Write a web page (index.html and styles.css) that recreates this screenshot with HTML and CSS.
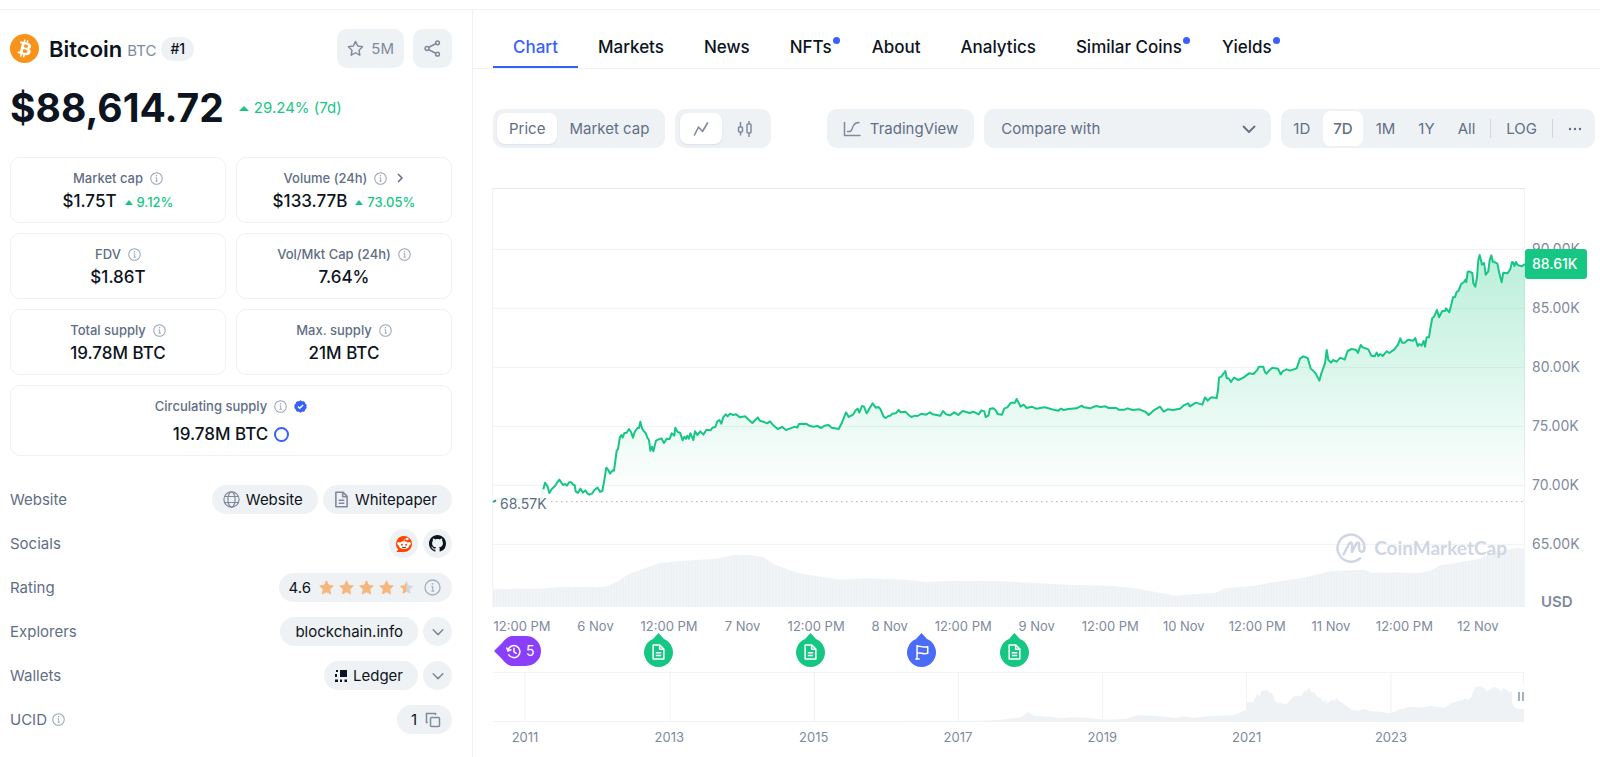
FILE: index.html
```html
<!DOCTYPE html>
<html lang="en">
<head>
<meta charset="utf-8">
<title>Bitcoin price today, BTC to USD live price</title>
<link rel="stylesheet" href="styles.css">
</head>
<body>
<svg class="sprite" aria-hidden="true">
  <symbol id="info" viewBox="0 0 14 14"><circle cx="7" cy="7" r="6.2" fill="none" stroke="currentColor" stroke-width="1.1"/><path d="M6 6.2h1.2v3.6M6 9.9h2.4" fill="none" stroke="currentColor"/><circle cx="7" cy="4" r=".8" fill="currentColor"/></symbol>
  <symbol id="down" viewBox="0 0 16 16"><path d="M2.5 5.5 8 11l5.500-5.500" fill="none" stroke="currentColor" stroke-width="1.800" stroke-linecap="round" stroke-linejoin="round"/></symbol>
  <symbol id="star" viewBox="0 0 16 16"><path d="M8 .9l2.200 4.700 5 .7-3.700 3.500.9 5.100L8 12.500l-4.400 2.400.9-5.100L.8 6.300l5-.7z" fill="currentColor" stroke="currentColor" stroke-linejoin="round"/></symbol>
  <symbol id="doc" viewBox="0 0 16 18"><path d="M2 1.200h7.500L14 5.700v11.100H2zM9.300 1.500V6H14M5 9.800h6M5 13h6" fill="none" stroke="currentColor" stroke-width="1.700" stroke-linejoin="round"/></symbol>
</svg>
<div class="topbar"></div>
<div class="page">
  <aside class="sidebar">
    <header class="coin">
      <svg class="coin-logo" viewBox="0 0 32 32"><circle cx="16" cy="16" r="16" fill="#f7931a"/><path fill="#fff" d="M23.189 14.02c.314-2.096-1.283-3.223-3.465-3.975l.708-2.840-1.728-.43-.69 2.765c-.454-.114-.92-.22-1.385-.326l.695-2.783L15.596 6l-.708 2.839c-.376-.086-.746-.17-1.104-.26l.002-.009-2.384-.595-.46 1.846s1.283.294 1.256.312c.7.175.826.638.805 1.006l-.806 3.235c.048.012.11.03.18.057l-.183-.045-1.130 4.532c-.086.212-.303.531-.793.41.018.025-1.256-.313-1.256-.313l-.858 1.978 2.250.561c.418.105.828.215 1.231.318l-.715 2.872 1.727.43.708-2.840c.472.127.93.245 1.378.357l-.706 2.828 1.728.43.715-2.866c2.948.558 5.164.333 6.097-2.333.752-2.146-.037-3.385-1.588-4.192 1.130-.26 1.980-1.003 2.207-2.538zm-3.950 5.538c-.533 2.147-4.148.986-5.320.695l.95-3.805c1.172.293 4.929.872 4.370 3.110zm.535-5.569c-.487 1.953-3.495.96-4.470.717l.86-3.450c.975.243 4.118.696 3.610 2.733z"/></svg>
      <h1 class="coin-name">Bitcoin</h1><span class="coin-symbol">BTC</span><span class="rank">#1</span>
      <div class="coin-actions">
        <button class="action watch"><svg width="17" height="17" viewBox="0 0 18 18"><path d="M9 1.500l2.300 4.900 5.200.7-3.800 3.700.9 5.300L9 13.500l-4.600 2.600.9-5.300L1.500 7.100l5.200-.7z" fill="none" stroke="currentColor" stroke-width="1.500" stroke-linejoin="round"/></svg>5M</button>
        <button class="action share" aria-label="Share"><svg width="17" height="17" viewBox="0 0 17 17" fill="none" stroke="currentColor" stroke-width="1.500"><path d="M4.500 7.500l7.500-4M4.500 9.500l7.500 4"/><circle cx="3" cy="8.500" r="1.900"/><circle cx="13.500" cy="2.800" r="1.900"/><circle cx="13.500" cy="14.200" r="1.900"/></svg></button>
      </div>
    </header>
    <div class="price-row"><span class="price">$88,614.72</span><span class="change big"><i class="up"></i>29.24% (7d)</span></div>
    <dl class="stats">
      <div class="stat"><dt>Market cap <svg class="info"><use href="#info"/></svg></dt><dd>$1.75T <span class="change"><i class="up"></i>9.12%</span></dd></div>
      <div class="stat"><dt>Volume (24h) <svg class="info"><use href="#info"/></svg><svg class="more" viewBox="0 0 8 12"><path d="M2 2l4 4-4 4" fill="none" stroke="currentColor" stroke-width="1.500"/></svg></dt><dd>$133.77B <span class="change"><i class="up"></i>73.05%</span></dd></div>
      <div class="stat"><dt>FDV <svg class="info"><use href="#info"/></svg></dt><dd>$1.86T</dd></div>
      <div class="stat"><dt>Vol/Mkt Cap (24h) <svg class="info"><use href="#info"/></svg></dt><dd>7.64%</dd></div>
      <div class="stat"><dt>Total supply <svg class="info"><use href="#info"/></svg></dt><dd>19.78M BTC</dd></div>
      <div class="stat"><dt>Max. supply <svg class="info"><use href="#info"/></svg></dt><dd>21M BTC</dd></div>
      <div class="stat wide"><dt>Circulating supply <svg class="info"><use href="#info"/></svg><svg class="info verified" viewBox="0 0 14 14"><path d="M7 .8l1.800 1.100 2.100.1.900 1.900 1.400 1.600L12.900 7l.3 1.500-1.400 1.600-.9 1.900-2.100.1L7 13.200l-1.800-1.100-2.100-.1-.9-1.900L.8 8.500 1.100 7 .8 5.500l1.400-1.600L3.100 2l2.100-.1z" fill="#3861fb" stroke="#3861fb" stroke-linejoin="round"/><path d="M4.300 7.100l1.900 1.900 3.600-3.700" fill="none" stroke="#fff" stroke-width="1.500"/></svg></dt><dd>19.78M BTC<i class="ring"></i></dd></div>
    </dl>
    <ul class="links">
      <li>Website<span class="pills"><a class="pill" href="#"><svg width="17" height="17" viewBox="0 0 17 17" fill="none" stroke="currentColor" stroke-width="1.200"><circle cx="8.500" cy="8.500" r="7.600"/><ellipse cx="8.500" cy="8.500" rx="3.600" ry="7.600"/><path d="M1.700 5.500h13.600M1.700 11.500h13.600"/></svg>Website</a><a class="pill" href="#"><svg width="15" height="17"><use href="#doc"/></svg>Whitepaper</a></span></li>
      <li>Socials<span class="pills"><a class="pill round" href="#" aria-label="Reddit"><svg width="18" height="18" viewBox="0 0 18 18"><path d="M9 1a8 8 0 1 1 0 16H1.300l2-2.400A8 8 0 0 1 9 1z" fill="#ff4500"/><ellipse cx="9" cy="10.200" rx="5.300" ry="3.900" fill="#fff"/><circle cx="3.700" cy="8.600" r="1.500" fill="#fff"/><circle cx="14.300" cy="8.600" r="1.500" fill="#fff"/><circle cx="12.300" cy="4" r="1.300" fill="#fff"/><path d="M9 6.500c0-1.800 1-2.600 2.600-2.500" fill="none" stroke="#fff" stroke-width=".8"/><circle cx="6.900" cy="9.700" r="1" fill="#ff4500"/><circle cx="11.100" cy="9.700" r="1" fill="#ff4500"/><path d="M7 12.100q2 1.200 4 0" fill="none" stroke="#222" stroke-width=".9"/></svg></a><a class="pill round" href="#" aria-label="GitHub"><svg width="17" height="17" viewBox="0 0 16 16"><path fill="#0d1421" d="M8 0C3.580 0 0 3.580 0 8c0 3.540 2.290 6.530 5.470 7.590.4.07.55-.17.55-.38 0-.19-.01-.82-.01-1.490-2.010.37-2.530-.49-2.690-.94-.09-.23-.48-.94-.82-1.130-.28-.15-.68-.52-.01-.53.63-.01 1.080.58 1.230.82.72 1.210 1.870.87 2.330.66.07-.52.28-.87.51-1.070-1.780-.2-3.640-.89-3.640-3.950 0-.87.31-1.590.82-2.150-.08-.2-.36-1.020.08-2.120 0 0 .67-.21 2.200.82.64-.18 1.320-.27 2-.27s1.360.09 2 .27c1.530-1.040 2.200-.82 2.200-.82.44 1.100.16 1.920.08 2.120.51.56.82 1.270.82 2.150 0 3.070-1.870 3.750-3.650 3.950.29.25.54.73.54 1.480 0 1.070-.01 1.930-.01 2.200 0 .21.15.46.55.38A8.013 8.013 0 0 0 16 8c0-4.420-3.580-8-8-8z"/></svg></a></span></li>
      <li>Rating<span class="pills"><span class="pill rating">4.6<span class="stars"><svg><use href="#star"/></svg><svg><use href="#star"/></svg><svg><use href="#star"/></svg><svg><use href="#star"/></svg><svg viewBox="0 0 16 16"><path d="M8 .9l2.200 4.700 5 .7-3.700 3.500.9 5.100L8 12.500z" fill="#cfd6e4"/><path d="M8 .9v11.600l-4.400 2.400.9-5.100L.8 6.300l5-.7z" fill="currentColor"/></svg></span><svg class="rating-info"><use href="#info"/></svg></span></span></li>
      <li>Explorers<span class="pills"><a class="pill plain" href="#">blockchain.info</a><button class="pill round" aria-label="More explorers"><svg width="14" height="14"><use href="#down"/></svg></button></span></li>
      <li>Wallets<span class="pills"><a class="pill" href="#"><svg class="ledger" width="12" height="12" viewBox="0 0 12 12" fill="#0d1421"><path d="M5 0h7v7H5zM1 0h2v2H1zM0 4h2v3H0zM0 9.500h3V12H0zM5 9.500h2V12H5zM9.500 9.500H12V12H9.500z"/></svg>Ledger</a><button class="pill round" aria-label="More wallets"><svg width="14" height="14"><use href="#down"/></svg></button></span></li>
      <li><span>UCID <svg class="info"><use href="#info"/></svg></span><span class="pills"><button class="pill ucid">1<svg width="16" height="16" viewBox="0 0 16 16" fill="none" stroke="currentColor" stroke-width="1.500"><rect x="5.500" y="5.500" width="9" height="9" rx="1"/><path d="M2.800 10.500H1.500v-9h9v1.600"/></svg></button></span></li>
    </ul>
  </aside>

  <main class="main">
    <nav class="tabs"><a class="tab active" href="#">Chart</a><a class="tab" href="#">Markets</a><a class="tab" href="#">News</a><a class="tab dot" href="#">NFTs</a><a class="tab" href="#">About</a><a class="tab" href="#">Analytics</a><a class="tab dot" href="#">Similar Coins</a><a class="tab dot" href="#">Yields</a></nav>
    <div class="content">
      <div class="controls">
        <div class="group"><button class="seg on">Price</button><button class="seg">Market cap</button></div>
        <div class="group icons"><button class="seg on" aria-label="Line chart"><svg width="16" height="16" viewBox="0 0 16 16" fill="none" stroke="currentColor" stroke-width="1.600" stroke-linecap="round" stroke-linejoin="round"><path d="M1.500 14l4-8 4 4.500L14.500 2"/></svg></button><button class="seg" aria-label="Candlestick chart"><svg width="16" height="16" viewBox="0 0 16 16" fill="none" stroke="currentColor" stroke-width="1.500"><path d="M3.500 1v5M3.500 11v3.500M12 0v3M12 12v4"/><rect x="1.500" y="6" width="4" height="5" rx="1"/><rect x="10" y="3" width="4" height="9" rx="1"/></svg></button></div>
        <button class="group tv"><svg width="18" height="16" viewBox="0 0 18 16" fill="none" stroke="currentColor" stroke-width="1.500" stroke-linecap="round"><path d="M1.500 1.500v13H17M4.500 10.500c5 .5 4-2.500 6-6C11.500 2.500 13 1.500 16 1.500"/></svg>TradingView</button>
        <label class="compare"><select aria-label="Compare with"><option>Compare with</option></select><svg width="16" height="16"><use href="#down"/></svg></label>
        <div class="group ranges"><button class="range">1D</button><button class="range on">7D</button><button class="range">1M</button><button class="range">1Y</button><button class="range">All</button><i class="sep"></i><button class="range log">LOG</button><i class="sep"></i><button class="range dots" aria-label="More"><svg width="14" height="4" viewBox="0 0 14 4" fill="currentColor"><circle cx="2" cy="2" r="1.200"/><circle cx="7" cy="2" r="1.200"/><circle cx="12" cy="2" r="1.200"/></svg></button></div>
      </div>

      <div class="chart">
        <div class="plot">
          <svg class="plot-svg" viewBox="0 0 3099 1257" preserveAspectRatio="none">
            <defs>
              <linearGradient id="fade" gradientUnits="userSpaceOnUse" x1="0" y1="200" x2="0" y2="920"><stop offset="0" stop-color="#16c784" stop-opacity=".29"/><stop offset="1" stop-color="#16c784" stop-opacity="0"/></linearGradient>
              <pattern id="bars" width="9" height="9" patternUnits="userSpaceOnUse"><rect width="9" height="9" fill="#eff2f5"/><rect width="2" height="9" fill="#f4f6f8"/></pattern>
            </defs>
            <path class="grid-line" d="M0 184H3099M0 361H3099M0 538H3099M0 715H3099M0 892H3099M0 1069H3099M2 0V1257M3097 0V1257"/>
            <path class="top-line" d="M0 1H3099"/>
            <path fill="url(#bars)" d="M0 1257V1204L162 1201 195 1198 253 1197 339 1196 377 1181 403 1162 435 1149 500 1126 575 1118 671 1112 725 1101 778 1101 816 1108 843 1128 918 1155 971 1164 1046 1175 1132 1171 1239 1175 1303 1182 1357 1179 1518 1179 1644 1186 1740 1191 1858 1193 1923 1199 1987 1211 2051 1223 2105 1219 2169 1215 2201 1200 2287 1193 2351 1181 2426 1171 2517 1149 2619 1145 2640 1155 2715 1153 2769 1156 2812 1149 2844 1132 2887 1126 2962 1112 3005 1091 3058 1083 3080 1079 3099 1083V1257Z"/>
            <path class="early" d="M12 936 36 930 52 926 70 932 100 936 130 934 148 932 154 904"/>
            <path id="price-area" fill="url(#fade)" d="M154 941V904L159 884 167 896 172 915 180 902 189 894 195 884 202 875 213 891 225 893 231 883 238 883 248 891 251 910 258 915 265 902 273 914 280 907 292 920 300 917 307 906 317 899 324 911 331 909 343 839 354 857 366 848 374 788 378 784 383 750 388 741 397 735 411 723 423 749 436 720 445 701 450 721 461 735 471 756 475 788 484 790 492 758 508 751 516 765 533 753 539 736 550 719 564 734 572 757 604 756 609 730 634 740 656 727 670 717 676 700 688 707 701 679 714 677 732 679 744 688 759 685 781 705 798 688 814 701 834 700 857 723 882 726 909 716 921 708 942 707 964 716 988 720 1010 711 1019 719 1040 723 1062 673 1084 679 1110 654 1124 676 1142 646 1165 663 1181 690 1220 666 1258 687 1302 680 1345 683 1374 682 1412 669 1460 679 1481 687 1494 662 1511 667 1530 680 1557 644 1574 633 1586 656 1632 662 1699 668 1769 653 1794 661 1840 655 1898 665 1942 664 1970 681 2004 656 2015 671 2064 662 2088 646 2131 650 2139 628 2174 630 2181 569 2200 549 2217 582 2254 569 2271 556 2284 558 2301 536 2314 536 2323 557 2341 539 2358 542 2366 559 2414 541 2424 512 2434 505 2447 510 2456 541 2471 556 2482 578 2499 526 2504 486 2517 524 2558 515 2567 489 2591 485 2606 471 2629 484 2638 503 2672 504 2707 484 2725 451 2738 464 2770 450 2777 474 2799 476 2811 448 2821 390 2835 366 2841 388 2862 361 2872 373 2883 328 2907 289 2923 282 2927 252 2941 255 2950 296 2963 201 2970 230 2981 260 2998 202 3016 226 3029 283 3034 254 3047 256 3060 222 3089 235 3099 228V941Z"/>
            <path class="price-line" d="M154 904L159 884 167 896 172 915 180 902 189 894 195 884 202 875 208 884 213 891 220 888 225 893 231 883 238 883 243 890 248 891 251 910 258 915 265 902 273 914 280 907 286 916 292 920 300 917 307 906 317 899 324 911 331 909 337 876 343 839 349 846 354 857 362 847 366 848 370 819 374 788 378 784 383 750 388 741 392 749 397 735 404 734 411 723 417 732 423 749 428 732 436 720 441 720 445 701 450 721 455 729 461 735 466 749 471 756 475 788 480 776 484 790 492 758 500 754 508 751 516 765 524 752 533 753 539 736 547 743 550 719 557 732 564 734 572 757 577 746 582 753 586 743 591 752 595 736 604 756 609 730 616 741 625 730 634 740 644 725 656 727 661 719 670 717 676 700 682 696 688 707 693 689 701 679 707 685 714 677 724 681 732 679 744 688 759 685 770 695 781 705 790 696 798 688 803 698 814 701 825 706 834 700 844 712 857 723 871 717 882 726 895 721 909 716 916 719 921 708 942 707 952 713 964 716 976 714 988 720 997 713 1010 711 1019 719 1040 723 1049 706 1062 673 1070 687 1084 679 1091 667 1097 662 1102 674 1110 654 1116 656 1124 676 1132 662 1142 646 1151 659 1159 657 1165 663 1175 686 1181 690 1189 684 1195 683 1201 677 1211 676 1220 666 1226 673 1240 671 1249 680 1258 687 1269 683 1277 684 1289 677 1302 680 1314 673 1322 679 1345 683 1353 669 1362 679 1374 682 1387 673 1399 681 1412 669 1433 675 1444 671 1460 679 1468 667 1477 670 1481 687 1489 683 1494 662 1504 661 1511 667 1517 678 1530 680 1537 661 1546 658 1557 644 1569 644 1574 633 1586 656 1595 650 1604 660 1619 656 1632 662 1658 658 1679 664 1699 668 1707 662 1715 666 1729 663 1754 661 1769 653 1776 658 1794 661 1812 654 1826 657 1840 655 1850 660 1873 660 1880 665 1898 665 1907 661 1922 666 1942 664 1961 672 1970 681 1984 668 2004 656 2015 671 2027 664 2042 666 2064 662 2074 653 2088 646 2094 655 2111 644 2131 650 2139 628 2147 638 2157 628 2174 630 2178 606 2181 569 2188 566 2200 549 2204 570 2211 572 2217 582 2226 569 2239 576 2254 569 2271 556 2284 558 2295 547 2301 536 2314 536 2318 550 2323 557 2331 548 2341 539 2358 542 2366 559 2372 550 2384 544 2394 548 2414 541 2424 512 2434 505 2447 510 2456 541 2471 556 2482 578 2488 556 2499 526 2504 486 2509 516 2517 524 2523 516 2534 521 2545 509 2558 515 2567 489 2579 483 2591 485 2598 495 2606 471 2612 478 2629 484 2638 503 2648 505 2654 494 2659 504 2665 498 2672 504 2684 490 2692 495 2707 484 2718 470 2725 451 2730 464 2738 464 2748 455 2764 458 2770 450 2777 474 2782 468 2789 473 2795 459 2799 476 2804 448 2811 448 2815 421 2821 390 2826 386 2835 366 2841 388 2851 369 2859 369 2862 361 2872 373 2879 346 2883 328 2889 327 2894 312 2900 308 2907 289 2916 282 2920 275 2923 282 2927 252 2931 250 2941 255 2944 286 2950 296 2955 268 2959 216 2963 201 2970 230 2976 225 2981 260 2989 250 2993 216 2998 202 3002 221 3016 226 3022 256 3029 283 3034 254 3047 256 3055 243 3060 222 3064 224 3067 234 3072 222 3077 231 3089 235 3099 228"/>
            <path class="open-line" d="M178 941H3099"/>
            <path d="M3 942l9-5" stroke="#16a764" stroke-width="6"/>
          </svg>
          <span class="open-label">68.57K</span>
          <div class="watermark"><svg width="30" height="30" viewBox="0 0 30 30" fill="none" stroke="currentColor" stroke-width="2.500" stroke-linecap="round" stroke-linejoin="round"><path d="M24 25.200A13.500 13.500 0 1 1 28.500 15c0 4.800-5.500 4.800-5.500.5v-3.500c0-3-2-3.200-3.200-.5L16 19v-7c0-3-2-3.200-3.300-.5L7.500 21.500"/></svg><span>CoinMarketCap</span></div>
        </div>
        <div class="y-axis"><span>90.00K</span><span>85.00K</span><span>80.00K</span><span>75.00K</span><span>70.00K</span><span>65.00K</span><b class="last">88.61K</b><b class="unit">USD</b></div>
      </div>
      <div class="timeline">
        <div class="x-axis"><span>12:00 PM</span><span>6 Nov</span><span>12:00 PM</span><span>7 Nov</span><span>12:00 PM</span><span>8 Nov</span><span>12:00 PM</span><span>9 Nov</span><span>12:00 PM</span><span>10 Nov</span><span>12:00 PM</span><span>11 Nov</span><span>12:00 PM</span><span>12 Nov</span></div>
        <div class="events">
          <button class="history"><svg class="history-bg" viewBox="0 0 47 30" preserveAspectRatio="none"><path d="M0 15 8 7C12 2 15 0 19 0h13a15 15 0 0 1 0 30H19c-4 0-7-2-11-7z" fill="#8a3ffc"/></svg><svg class="history-icon" width="15" height="15" viewBox="0 0 15 15" fill="none" stroke="#fff" stroke-width="1.500" stroke-linecap="round"><path d="M2 6.500a6 6 0 1 1 .8 4.300M.8 4l1.200 3 2.900-1.200M8 4.300v3.500l2.300 1.500"/></svg><span>5</span></button>
          <button class="pin" aria-label="News" style="left:16.1%"><svg viewBox="0 0 29 34"><path d="M14.500 0l5.500 6A14.500 14.500 0 1 1 9 6z" fill="#16c784"/></svg><svg class="glyph"><use href="#doc"/></svg></button>
          <button class="pin" aria-label="News" style="left:30.8%"><svg viewBox="0 0 29 34"><path d="M14.500 0l5.500 6A14.500 14.500 0 1 1 9 6z" fill="#16c784"/></svg><svg class="glyph"><use href="#doc"/></svg></button>
          <button class="pin" aria-label="Event" style="left:41.6%"><svg viewBox="0 0 29 34"><path d="M14.500 0l5.500 6A14.500 14.500 0 1 1 9 6z" fill="#4a6cf7"/></svg><svg class="glyph" viewBox="0 0 16 18" fill="none" stroke="#fff" stroke-width="1.700" stroke-linejoin="round"><path d="M3 1v16M1 17h5M3 3c4-2 6 2 12 0v7.500c-6 2-8-2-12 0"/></svg></button>
          <button class="pin" aria-label="News" style="left:50.6%"><svg viewBox="0 0 29 34"><path d="M14.500 0l5.500 6A14.500 14.500 0 1 1 9 6z" fill="#16c784"/></svg><svg class="glyph"><use href="#doc"/></svg></button>
        </div>
        <div class="mini">
          <svg viewBox="0 0 3090 150" preserveAspectRatio="none"><path class="grid-line" d="M0 1H3090M96 0V148M531 0V148M963 0V148M1395 0V148M1827 0V148M2258 0V148M2691 0V148M3088 0V148"/><path fill="#eff2f5" d="M600 149L711 148 1461 146 1525 143 1584 136 1603 120 1622 131 1641 132 1673 135 1705 139 1737 136 1791 138 1834 143 1898 140 1930 130 1984 131 2048 138 2070 133 2102 138 2145 132 2220 130 2257 114 2260 89 2278 92 2291 64 2297 74 2303 58 2321 54 2327 62 2334 62 2346 90 2378 97 2400 73 2423 72 2432 54 2437 60 2445 45 2453 60 2464 62 2471 76 2480 78 2490 91 2495 84 2501 92 2514 84 2522 86 2528 77 2539 89 2552 97 2573 114 2595 116 2611 111 2632 118 2659 119 2691 124 2712 114 2745 105 2787 106 2809 102 2852 107 2873 93 2905 84 2916 79 2921 85 2932 76 2943 46 2959 42 2970 47 2980 57 3002 44 3023 57 3028 47 3045 59 3061 56 3090 59V149Z"/><path class="grid-line" d="M0 149H3090"/></svg>
          <i class="handle"></i>
        </div>
        <div class="years"><span>2011</span><span>2013</span><span>2015</span><span>2017</span><span>2019</span><span>2021</span><span>2023</span></div>
      </div>
    </div>
  </main>
</div>
</body>
</html>
```
FILE: styles.css
```css
*, *::before, *::after { box-sizing: border-box; }
body { margin: 0; background: #fff; color: #0d1421; font: 400 15px/20px Inter, "Liberation Sans", sans-serif; }
button { margin: 0; padding: 0; border: 0; background: none; font: inherit; color: inherit; cursor: pointer; }
a { color: inherit; text-decoration: none; }
svg { display: block; flex: none; }
.sprite { position: absolute; width: 0; height: 0; }

.topbar { height: 10px; border-bottom: 1px solid #eff2f5; }
.page { display: grid; grid-template-columns: 473px minmax(0, 1fr); min-height: calc(100vh - 10px); }

.sidebar { padding: 19px 20px 20px 10px; border-right: 1px solid #eff2f5; }
.coin { display: flex; align-items: center; height: 39px; }
.coin-logo { width: 29px; height: 29px; margin-right: 10px; }
.coin-name { margin: 0; font-size: 22px; line-height: 28px; font-weight: 600; }
.coin-symbol { margin: 4px 5px 0; color: #808a9d; font-size: 15px; font-weight: 400; }
.rank { padding: 0 9px; border-radius: 12px; background: #eff2f5; font-size: 14px; line-height: 24px; font-weight: 500; }
.coin-actions { display: flex; gap: 9px; margin-left: auto; }
.action { display: flex; align-items: center; justify-content: center; gap: 7px; height: 39px; border-radius: 10px; background: #eff2f5; color: #808a9d; }
.watch { padding: 0 10px; }
.share { width: 39px; }

.price-row { display: flex; align-items: center; gap: 15px; margin-top: 16px; }
.price { font-size: 39px; line-height: 48px; font-weight: 700; }
.change { display: inline-flex; align-items: center; gap: 4px; padding-top: 1px; color: #16c784; font-size: 13px; line-height: 20px; font-weight: 500; }
.change.big { gap: 5px; padding: 0; font-size: 15px; font-weight: 400; }
.up { border: 4px solid transparent; border-top: 0; border-bottom: 5px solid #16c784; }
.big .up { border-left-width: 5px; border-right-width: 5px; }

.stats { display: grid; grid-template-columns: 1fr 1fr; gap: 10px; margin: 25px 0 0; }
.stat { padding: 10px 8px 8px; border: 1px solid #eff2f5; border-radius: 10px; }
.stat dt, .stat dd { display: flex; align-items: center; justify-content: center; }
.stat dt { gap: 7px; color: #616e85; font-size: 13px; font-weight: 500; line-height: 20px; }
.stat dd { gap: 8px; margin: 0; padding-top: 1px; font-size: 17px; line-height: 25px; font-weight: 550; }
.stat.wide { grid-column: 1 / -1; }
.stat.wide dd { gap: 6px; padding-top: 6px; }
.info { width: 13px; height: 13px; color: #98a2b8; }
.more { width: 8px; height: 12px; margin-left: 2px; color: #616e85; }
.ring { width: 15px; height: 15px; border: 2px solid #3861fb; border-radius: 50%; }

.links { display: grid; gap: 15px; margin: 29px 0 0; padding: 0; list-style: none; color: #616e85; }
.links li, .links li > span { display: flex; align-items: center; justify-content: space-between; gap: 5px; }
.pill { display: flex; align-items: center; gap: 6px; height: 29px; padding: 0 15px 0 11px; border-radius: 15px; background: #eff2f5; color: #0d1421; }
.pill svg { color: #808a9d; }
.pill.round { justify-content: center; width: 29px; padding: 0; }
.pill.plain { padding: 0 15px; }
.pill.rating, .pill.ucid { padding: 0 11px 0 10px; gap: 8px; }
.pill.ucid { padding-left: 14px; }
.stars { display: flex; gap: 5px; }
.stars svg { width: 15px; height: 15px; color: #f5b77d; }
.pill .rating-info { width: 17px; height: 17px; margin-left: 2px; color: #a6b0c3; }

.tabs { display: flex; padding-left: 20px; border-bottom: 1px solid #eff2f5; }
.tab { position: relative; padding: 25px 20px 7px; border-bottom: 2px solid transparent; font-size: 17px; line-height: 24px; font-weight: 500; white-space: nowrap; }
.tab.active { border-color: #3861fb; color: #3861fb; }
.dot::after { content: ""; position: absolute; top: 27px; right: 12px; width: 7px; height: 7px; border-radius: 50%; background: #3861fb; }

.content { padding: 40px 5px 0 20px; }
.controls { display: flex; gap: 10px; height: 39px; color: #616e85; }
.group { display: flex; align-items: center; padding: 4px; border-radius: 10px; background: #eff2f5; }
.seg { display: flex; align-items: center; height: 31px; padding: 0 12px; border-radius: 8px; white-space: nowrap; }
.seg.on { background: #fff; box-shadow: 0 1px 2px rgba(128, 138, 157, .18); }
.icons .seg { width: 42px; justify-content: center; padding: 0; color: #808a9d; }
.icons { gap: 2px; padding: 4px 5px; }
.tv { gap: 9px; margin-left: auto; padding: 0 16px; }
.tv svg { color: #808a9d; }
.compare { position: relative; flex: 0 1 287px; }
.compare select { width: 100%; height: 39px; padding: 0 40px 0 17px; border: 0; border-radius: 10px; background: #eff2f5; color: inherit; font: inherit; appearance: none; }
.compare svg { position: absolute; top: 12px; right: 14px; pointer-events: none; }
.ranges { gap: 3px; padding: 2px; }
.range { height: 35px; padding: 0 10px; border-radius: 8px; }
.range.on { background: #fff; font-weight: 500; }
.sep { width: 1px; height: 19px; margin: 0 2px; background: #cfd6e4; }
.range.dots { padding: 0 11px 0 10px; }

.chart { display: flex; margin: 40px 0 0 -1px; }
.plot { position: relative; flex: 1; }
.plot-svg { width: 100%; height: 419px; }
.grid-line, .top-line { fill: none; stroke: #eff1f3; stroke-width: 1px; vector-effect: non-scaling-stroke; }
.top-line { stroke: #e3e6ea; }
.price-line, .early { fill: none; stroke: #16c784; stroke-width: 2px; stroke-linejoin: round; vector-effect: non-scaling-stroke; }
.early { opacity: .1; }
.open-line { stroke: #858b96; stroke-width: 1px; stroke-dasharray: 1 4; vector-effect: non-scaling-stroke; }
.open-label { position: absolute; left: 8px; top: 306px; color: #616e85; font-size: 14px; }
.watermark { position: absolute; right: 18px; bottom: 44px; display: flex; align-items: center; gap: 8px; color: #cfd6e4; font: 700 19px/30px Lato, sans-serif; }
.y-axis { position: relative; display: flex; flex-direction: column; justify-content: space-between; width: 70px; padding: 61px 0 63px 7px; color: #808a9d; font-size: 14px; }
.y-axis span { height: 0; line-height: 0; }
.last { position: absolute; left: 0; top: 61px; padding: 0 10px 0 7px; border-radius: 3px; background: #16c784; color: #fff; line-height: 30px; font-weight: 500; }
.unit { position: absolute; left: 16px; bottom: -5px; font-size: 15px; font-weight: 600; }

.timeline { margin-right: 71px; color: #808a9d; font-size: 13px; }
.x-axis, .years { display: flex; justify-content: space-between; }
.x-axis { padding: 9px 46px 0 29px; }
.x-axis span, .years span { display: flex; justify-content: center; width: 0; white-space: nowrap; }
.events { position: relative; height: 34px; margin: -3px 0 5px; }
.history { position: relative; display: flex; align-items: center; gap: 5px; width: 47px; height: 30px; margin: 0 0 0 1px; padding-left: 12px; color: #fff; font-size: 14px; }
.events .history { top: 3px; }
.history-bg { position: absolute; inset: 0; width: 100%; height: 100%; }
.history-icon, .history span { position: relative; }
.pin { position: absolute; top: 0; width: 29px; height: 34px; margin-left: -15px; }
.pin .glyph { position: absolute; left: 7px; top: 11px; width: 15px; height: 16px; color: #fff; }
.mini { position: relative; overflow: hidden; }
.mini > svg { width: 100%; height: 50px; }
.handle { position: absolute; right: -12px; top: 12px; width: 24px; height: 25px; border-radius: 8px; background: #fff; }
.handle::before { content: ""; position: absolute; left: 6px; top: 8px; width: 6px; height: 9px; border: 0 solid #a6b0c3; border-width: 0 2px; }
.years { padding: 5px 133px 0 32px; }
```
